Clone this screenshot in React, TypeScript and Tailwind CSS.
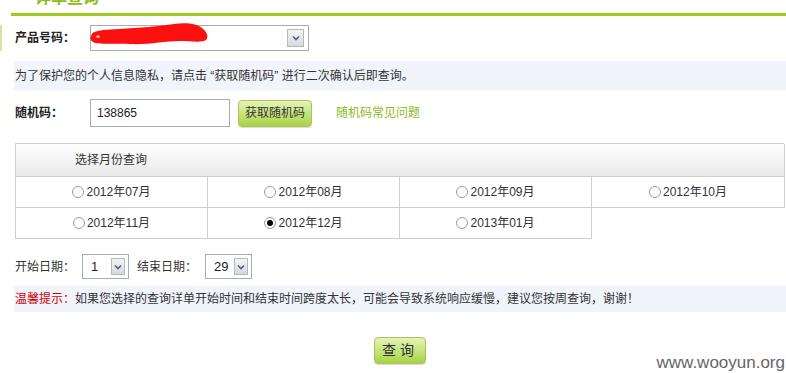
import React from "react";

const months = [
  { label: "2012年07月", checked: false },
  { label: "2012年08月", checked: false },
  { label: "2012年09月", checked: false },
  { label: "2012年10月", checked: false },
  { label: "2012年11月", checked: false },
  { label: "2012年12月", checked: true },
  { label: "2013年01月", checked: false },
];

function Arrow({ className }: { className: string }) {
  return (
    <span className={`flex items-center justify-center border border-[#b5b9bd] bg-gradient-to-b from-[#f4f4f4] to-[#d9d9d9] ${className}`}>
      <svg width="8" height="6" viewBox="0 0 8 6">
        <path d="M1 1.5 L4 4.5 L7 1.5" fill="none" stroke="#4d6185" strokeWidth="1.6" />
      </svg>
    </span>
  );
}

function Radio({ checked }: { checked: boolean }) {
  return (
    <span className="flex h-[12px] w-[12px] items-center justify-center rounded-full border border-[#9a9a9a] bg-white">
      {checked && <span className="h-[6px] w-[6px] rounded-full bg-black" />}
    </span>
  );
}

function DaySelect({ value }: { value: string }) {
  return (
    <div className="flex h-[25px] w-[47px] items-center border border-[#a5acb2] bg-white pl-[8px] pr-[3px]">
      <span className="flex-1 text-[13px] leading-none text-[#222]">{value}</span>
      <Arrow className="h-[17px] w-[14px]" />
    </div>
  );
}

export default function App() {
  return (
    <div
      className="relative h-[373px] w-[786px] overflow-hidden bg-white text-[12px] text-[#333]"
      style={{ fontFamily: '"Liberation Sans", "Noto Sans CJK SC", sans-serif' }}
    >
      {/* title bar */}
      <div className="ml-[11px] flex h-[16px] items-end border-b-[3px] border-[#9fcb1d]">
        <div className="mb-[6px] shrink-0 pl-[24px] text-[16px] font-bold leading-[18px] text-[#8dbb15]">详单查询</div>
      </div>

      {/* product number */}
      <div className="mt-[9px] flex h-[26px] items-center border-l-[2px] border-[#d3e6a0] pl-[13px]">
        <span className="w-[75px] font-bold text-[#222]">产品号码：</span>
        <div className="relative flex h-[26px] w-[219px] items-center justify-end border border-[#a5acb2] bg-white pr-[4px]">
          <Arrow className="h-[18px] w-[17px]" />
          <svg className="absolute -left-[1px] -top-[3px]" width="120" height="24" viewBox="0 0 120 24">
            <path
              d="M1 13 C2 7 12 7 30 6 C48 5 70 3 84 1 C96 -1 108 1 112 5 C117 9 119 14 116 17 C112 20 100 18 90 18 C74 18 58 22 40 21 C26 20 8 22 3 19 C0 17 0 15 1 13 Z"
              fill="#ff1010"
            />
            <path d="M6 14 C7 12 9 12 10 14 C9 15 7 15 6 14 Z" fill="#ffe0e0" />
          </svg>
        </div>
      </div>

      {/* privacy notice */}
      <div className="ml-[14px] mt-[10px] flex h-[29px] items-center bg-[#f1f4fb] pl-[1px] text-[#333]">
        为了保护您的个人信息隐私，请点击 “获取随机码” 进行二次确认后即查询。
      </div>

      {/* random code */}
      <div className="mt-[9px] flex h-[28px] items-center pl-[15px]">
        <span className="w-[75px] font-bold text-[#222]">随机码：</span>
        <div className="flex h-[28px] w-[140px] items-center border border-[#a5acb2] bg-white pl-[6px] text-[12px] text-[#222]">138865</div>
        <button className="ml-[8px] h-[27px] w-[74px] rounded-[4px] border border-[#aac35c] bg-gradient-to-b from-[#e6f3b4] to-[#a9d23c] text-[12px] text-[#333] shadow-[0_1px_1px_rgba(0,0,0,0.15)]">
          获取随机码
        </button>
        <span className="ml-[24px] text-[#8cbb1a]">随机码常见问题</span>
      </div>

      {/* month table */}
      <div className="ml-[15px] mt-[16px] grid w-[769px] grid-cols-[192px_192px_192px_193px] border-l border-t border-[#cfcfcf]">
        <div className="col-span-4 flex h-[33px] items-center border-b border-r border-[#cfcfcf] bg-gradient-to-b from-[#ffffff] to-[#e8e8e8] pl-[59px] text-[#333]">
          选择月份查询
        </div>
        {months.map((m) => (
          <div key={m.label} className="flex h-[31px] items-center justify-center gap-[2px] border-b border-r border-[#cfcfcf]">
            <Radio checked={m.checked} />
            <span className="text-[12px] text-[#333]">{m.label}</span>
          </div>
        ))}
        <div className="h-[31px] bg-white" />
      </div>

      {/* date range */}
      <div className="mt-[15px] flex h-[25px] items-center pl-[15px]">
        <span className="w-[67px]">开始日期：</span>
        <DaySelect value="1" />
        <span className="ml-[8px] w-[68px]">结束日期：</span>
        <DaySelect value="29" />
      </div>

      {/* warning */}
      <div className="ml-[14px] mt-[7px] flex h-[26px] items-center bg-[#f1f4fb] pl-[1px]">
        <span className="text-[#d40000]">温馨提示：</span>
        <span>如果您选择的查询详单开始时间和结束时间跨度太长，可能会导致系统响应缓慢，建议您按周查询，谢谢！</span>
      </div>

      {/* submit */}
      <div className="mt-[25px] flex justify-center pl-[14px]">
        <button className="h-[27px] w-[52px] rounded-[4px] border border-[#aac35c] bg-gradient-to-b from-[#e6f3b4] to-[#a9d23c] text-[14px] tracking-[4px] text-[#333] shadow-[0_1px_1px_rgba(0,0,0,0.15)]">
          查询
        </button>
      </div>

      <div className="absolute bottom-[-2px] right-[1px] text-[17px] text-[#666]">www.wooyun.org</div>
    </div>
  );
}
